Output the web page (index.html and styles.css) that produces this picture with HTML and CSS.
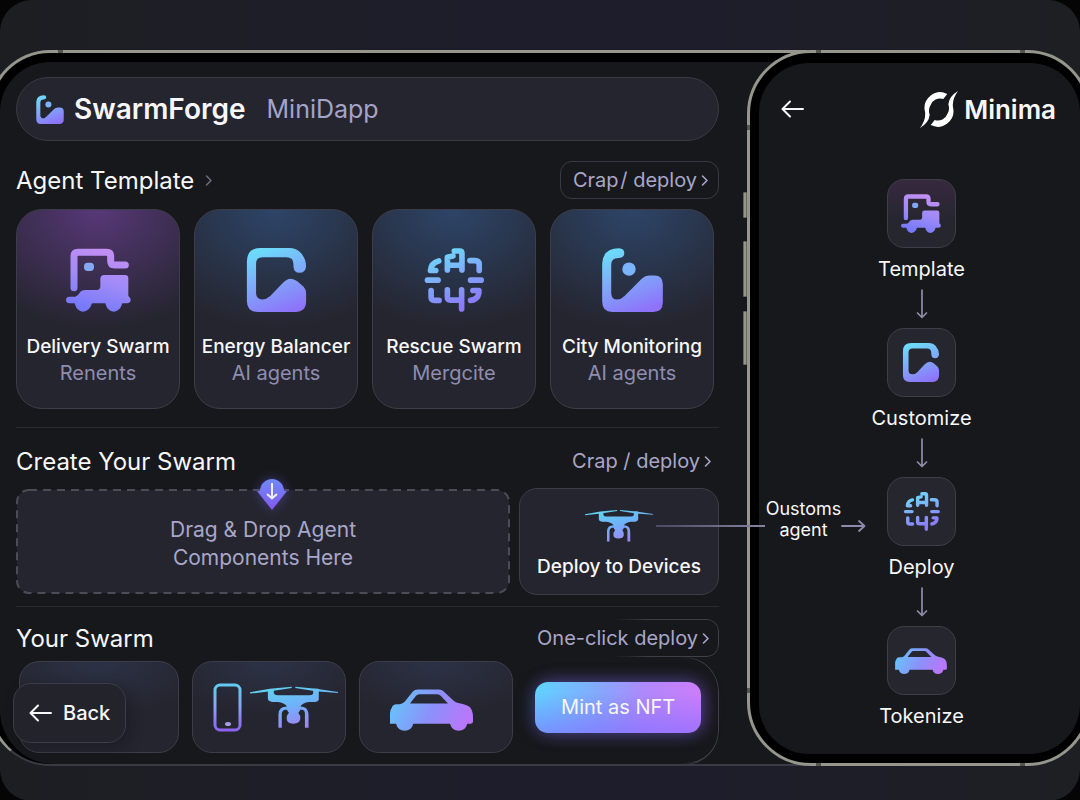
FILE: index.html
```html
<!DOCTYPE html>
<html lang="en">
<head>
<meta charset="utf-8">
<meta name="viewport" content="width=device-width, initial-scale=1">
<title>SwarmForge MiniDapp</title>
<link rel="stylesheet" href="styles.css">
</head>
<body>
<svg class="defs" aria-hidden="true">
  <defs>
    <linearGradient id="g-truck" gradientUnits="userSpaceOnUse" x1="130" y1="0" x2="75" y2="190">
      <stop offset="0" stop-color="#c68ff2"/><stop offset=".5" stop-color="#a08bf8"/><stop offset="1" stop-color="#7478fa"/>
    </linearGradient>
    <linearGradient id="g-cool" gradientUnits="userSpaceOnUse" x1="50" y1="0" x2="120" y2="190">
      <stop offset="0" stop-color="#6cdcfa"/><stop offset=".5" stop-color="#80a6fa"/><stop offset="1" stop-color="#8e72fa"/>
    </linearGradient>
    <linearGradient id="g-drone" gradientUnits="userSpaceOnUse" x1="110" y1="0" x2="140" y2="130">
      <stop offset="0" stop-color="#62d0ee"/><stop offset=".45" stop-color="#6fb2fa"/><stop offset="1" stop-color="#a084f4"/>
    </linearGradient>
    <linearGradient id="g-car" gradientUnits="userSpaceOnUse" x1="30" y1="20" x2="220" y2="110">
      <stop offset="0" stop-color="#6cbcfa"/><stop offset=".5" stop-color="#8c90fa"/><stop offset="1" stop-color="#b877fa"/>
    </linearGradient>
    <linearGradient id="g-phone" x1="0" y1="0" x2="0" y2="1">
      <stop offset="0" stop-color="#62cdf0"/><stop offset=".5" stop-color="#8aa2f4"/><stop offset="1" stop-color="#8e62f2"/>
    </linearGradient>
    <linearGradient id="g-pin" x1="0" y1="0" x2="0" y2="1">
      <stop offset="0" stop-color="#6f8af8"/><stop offset="1" stop-color="#8258f0"/>
    </linearGradient>
  </defs>
  <symbol id="truck" viewBox="0 0 195 190">
    <path d="M24 118V24Q24 12 36 12H122Q134 12 134 24V38Q134 50 146 50H178" fill="none" stroke="url(#g-truck)" stroke-width="21" stroke-linecap="round"/>
    <rect x="54" y="43" width="30" height="25" rx="11" fill="#86a8f4"/>
    <path d="M103 92Q103 80 115 80H177Q187 80 187 90V143Q195 148 194 156Q193 164 183 165H169Q162 190 143 190Q124 190 118 165H78Q70 190 51 190Q32 190 26 165H10Q0 164 0 155Q0 146 10 145H28Q36 143 40 135Q46 125 58 125H92Q103 125 103 114Z" fill="url(#g-truck)"/>
  </symbol>
  <symbol id="energy" viewBox="0 0 174 188">
    <path d="M0 40Q0 0 40 0H124Q146 0 158 14Q174 32 174 54Q172 73 155 73Q137 73 137 54Q137 38 132 32Q126 27 116 27H46Q27 27 27 46V134Q28 151 45 151Q58 151 68 142L104 104Q126 80 148 98L166 113Q174 122 174 132V156Q174 188 142 188H32Q0 188 0 156Z" fill="url(#g-cool)"/>
  </symbol>
  <symbol id="rescue" viewBox="0 0 181 193">
    <g fill="none" stroke="url(#g-cool)" stroke-width="17" stroke-linecap="round" stroke-linejoin="round">
      <path d="M43 39Q20 45 18 68H34"/>
      <path d="M69 66V28L86 24M90 9H106Q113 9 113 17V66M69 52H113"/>
      <path d="M137 38H152Q165 38 165 50V68"/>
      <path d="M9 97H41M139 97H171"/>
      <path d="M20 128V148Q20 158 30 158H44"/>
      <path d="M69 126V148Q69 157 78 157H112M112 126V184"/>
      <path d="M146 128H164V136Q160 156 139 158"/>
    </g>
  </symbol>
  <symbol id="city" viewBox="0 0 181 191">
    <path d="M0 46Q2 2 50 1Q66 2 66 15Q66 29 48 30Q27 31 27 50V134Q28 154 44 154Q56 154 66 144L118 92Q128 82 142 82H156Q181 82 181 108V162Q181 191 152 191H30Q0 191 0 160Z" fill="url(#g-cool)"/>
    <circle cx="80" cy="63" r="20" fill="#7cb4fa"/>
  </symbol>
  <symbol id="drone" viewBox="0 0 266 130">
    <path d="M0 19L60 8L126 2V6L62 16L0 23ZM137 2L200 8L266 18V21L198 16L137 6Z" fill="url(#g-drone)"/>
    <path d="M54 12H72V22Q74 28 84 28H180Q190 28 191 22V8H208V40Q206 48 196 48H178Q160 50 152 62Q166 62 172 70Q177 76 177 90V126H166V84Q166 74 158 72H152Q150 78 146 82Q154 90 152 100Q150 114 131 114Q112 114 111 100Q110 88 118 82Q114 78 112 72H106Q96 74 96 86V126H86V86Q86 62 112 62Q104 50 84 48H66Q54 46 54 38Z" fill="url(#g-drone)"/>
  </symbol>
  <symbol id="car" viewBox="0 0 249 125">
    <path fill-rule="evenodd" d="M0 104V72Q0 62 6 54Q8 46 20 45H30Q38 44 44 38L68 8Q74 1 84 1H146Q156 1 162 8L190 34Q196 40 208 42Q230 46 240 54Q249 64 249 84V98Q248 104 242 104H232Q226 125 206 125Q186 125 180 104H70Q64 125 44 125Q24 125 18 104ZM60 43H174L152 20Q148 15 142 15H88Q82 15 78 20Z" fill="url(#g-car)"/>
  </symbol>
  <symbol id="handset" viewBox="0 0 29 49">
    <rect x="2" y="2" width="25" height="45" rx="5" fill="none" stroke="url(#g-phone)" stroke-width="3"/>
    <ellipse cx="15" cy="41" rx="3" ry="2" fill="#a99be8"/>
  </symbol>
  <symbol id="arrow-left" viewBox="0 0 23 18">
    <path d="M9 1.500L1.500 9L9 16.500M1.500 9H22" fill="none" stroke="currentColor" stroke-width="2" stroke-linecap="round" stroke-linejoin="round"/>
  </symbol>
  <symbol id="arrow-down" viewBox="0 0 12 30">
    <path d="M6 1V28M1.500 24L6 28.500L10.500 24" fill="none" stroke="currentColor" stroke-width="1.700" stroke-linecap="round" stroke-linejoin="round"/>
  </symbol>
  <symbol id="chevron" viewBox="0 0 8 13">
    <path d="M1.500 2L6 6.500L1.500 11" fill="none" stroke="currentColor" stroke-width="1.600" stroke-linecap="round" stroke-linejoin="round"/>
  </symbol>
</svg>

<div class="stage">
  <main class="device">
    <span class="notch notch-device"></span>
    <div class="screen">
      <header class="brand">
        <svg class="brand-icon" aria-hidden="true"><use href="#city"/></svg>
        <h1 class="brand-name">SwarmForge</h1>
        <span class="brand-sub">MiniDapp</span>
      </header>

      <section>
        <div class="head">
          <h2 class="title">Agent Template <svg class="chevron" aria-hidden="true"><use href="#chevron"/></svg></h2>
          <button class="link boxed" type="button">Crap&#8202;/ deploy<svg class="chevron" aria-hidden="true"><use href="#chevron"/></svg></button>
        </div>
        <div class="templates">
          <article class="card template violet">
            <svg class="template-icon" aria-hidden="true"><use href="#truck"/></svg>
            <h3 class="template-name">Delivery Swarm</h3>
            <p class="template-note">Renents</p>
          </article>
          <article class="card template">
            <svg class="template-icon" aria-hidden="true"><use href="#energy"/></svg>
            <h3 class="template-name">Energy Balancer</h3>
            <p class="template-note">AI agents</p>
          </article>
          <article class="card template">
            <svg class="template-icon" aria-hidden="true"><use href="#rescue"/></svg>
            <h3 class="template-name">Rescue Swarm</h3>
            <p class="template-note">Mergcite</p>
          </article>
          <article class="card template">
            <svg class="template-icon" aria-hidden="true"><use href="#city"/></svg>
            <h3 class="template-name">City Monitoring</h3>
            <p class="template-note">AI agents</p>
          </article>
        </div>
      </section>

      <section class="create">
        <div class="head">
          <h2 class="title">Create Your Swarm</h2>
          <button class="link" type="button">Crap / deploy<svg class="chevron" aria-hidden="true"><use href="#chevron"/></svg></button>
        </div>
        <div class="build">
          <div class="drop">
            <svg class="dash" aria-hidden="true"><rect class="dash-line" width="100%" height="100%" rx="12"/></svg>
            <svg class="pin" viewBox="0 0 30 34" aria-hidden="true">
              <path d="M0 15H3A12 12 0 1 1 27 15H30L15 34Z" fill="url(#g-pin)"/>
              <path d="M15 7V22M10 18L15 22.500L20 18" fill="none" stroke="#eef" stroke-width="2"/>
            </svg>
            <p class="drop-text">Drag &amp; Drop Agent<br>Components Here</p>
          </div>
          <button class="card deploy" type="button">
            <svg class="drone-small" aria-hidden="true"><use href="#drone"/></svg>
            Deploy to Devices
          </button>
        </div>
      </section>

      <section class="yours">
        <div class="head">
          <h2 class="title">Your Swarm</h2>
          <button class="link boxed faded" type="button">One-click deploy<svg class="chevron" aria-hidden="true"><use href="#chevron"/></svg></button>
        </div>
        <div class="swarm">
          <div class="card slot">
            <button class="back" type="button"><svg class="arrow-left" aria-hidden="true"><use href="#arrow-left"/></svg>Back</button>
          </div>
          <div class="card slot slot-pair">
            <svg class="handset" aria-hidden="true"><use href="#handset"/></svg>
            <svg class="drone" aria-hidden="true"><use href="#drone"/></svg>
          </div>
          <div class="card slot slot-car">
            <svg class="car" aria-hidden="true"><use href="#car"/></svg>
          </div>
          <div class="mint-area">
            <button class="mint" type="button">Mint as NFT</button>
          </div>
        </div>
      </section>
    </div>
  </main>

  <aside class="phone">
    <span class="key key-a"></span><span class="key key-b"></span><span class="key key-c"></span>
    <span class="notch notch-a"></span><span class="notch notch-b"></span>
    <span class="notch notch-c"></span><span class="notch notch-d"></span>
    <span class="notch notch-side notch-e"></span><span class="notch notch-side notch-f"></span>
    <div class="phone-screen">
      <header class="phone-head">
        <button class="icon-button" type="button" aria-label="Back"><svg class="arrow-left" aria-hidden="true"><use href="#arrow-left"/></svg></button>
        <div class="minima">
          <svg class="minima-logo" viewBox="0 0 106 103" aria-hidden="true">
            <path id="swoosh" d="M76 8A44 44 0 0 0 14 58Q17 80 0 103Q25 88 27 66Q22 52 29 40A29 29 0 0 1 65 22Z" fill="#fff"/>
            <use href="#swoosh" transform="rotate(180 53 51.500)"/>
          </svg>
          <span>Minima</span>
        </div>
      </header>
      <ol class="steps">
        <li class="step"><span class="tile tile-violet"><svg class="tile-icon" aria-hidden="true"><use href="#truck"/></svg></span><span>Template</span></li>
        <li class="arrow"><svg class="arrow-down" aria-hidden="true"><use href="#arrow-down"/></svg></li>
        <li class="step"><span class="tile"><svg class="tile-icon" aria-hidden="true"><use href="#energy"/></svg></span><span>Customize</span></li>
        <li class="arrow"><svg class="arrow-down" aria-hidden="true"><use href="#arrow-down"/></svg></li>
        <li class="step">
          <span class="tile"><svg class="tile-icon" aria-hidden="true"><use href="#rescue"/></svg>
            <span class="connector">
              <span class="wire"></span>
              <span class="connector-text">Oustoms<br>agent</span>
              <svg class="arrow-right" viewBox="0 0 25 14" aria-hidden="true"><path d="M1 7H23M18 2L23.500 7L18 12" fill="none" stroke="#8f8cab" stroke-width="1.800" stroke-linecap="round" stroke-linejoin="round"/></svg>
            </span>
          </span>
          <span>Deploy</span>
        </li>
        <li class="arrow"><svg class="arrow-down" aria-hidden="true"><use href="#arrow-down"/></svg></li>
        <li class="step"><span class="tile"><svg class="tile-car" aria-hidden="true"><use href="#car"/></svg></span><span>Tokenize</span></li>
      </ol>
    </div>
  </aside>
</div>
</body>
</html>
```
FILE: styles.css
```css
* { box-sizing: border-box; }

body {
  margin: 0;
  background: #050506;
  color: #f7f7f9;
  font-family: Inter, "Liberation Sans", sans-serif;
}

h1, h2, h3, p, ol { margin: 0; padding: 0; font-weight: 400; }
svg { display: block; flex: none; }
button { font: inherit; color: inherit; background: none; border: 0; padding: 0; cursor: pointer; }
.defs { position: absolute; width: 0; height: 0; }

.stage {
  display: grid;
  grid-template-columns: minmax(0, 1fr) 333px;
  align-items: stretch;
  min-height: 100vh;
  padding: 50px 0 35px;
  border-radius: 32px;
  background: linear-gradient(90deg, #1d1e22, #1e1d2b 45%, #1e1d2b 65%, #1e1f23);
  overflow: hidden;
}

/* main device */
.device {
  position: relative;
  margin: 0 -60px 0 -12px;
  padding: 9px 0 0 9px;
  border: 3px solid #96968d;
  border-right: 0;
  border-bottom: 2px solid #393a44;
  border-radius: 62px 0 0 62px;
  background: #000;
}
.screen {
  height: 100%;
  padding: 15px 88px 10px 16px;
  border-radius: 50px 0 0 54px;
  background: #17181b;
}

.brand {
  display: flex;
  align-items: center;
  height: 64px;
  padding-left: 19px;
  border: 1px solid #3a3a45;
  border-radius: 32px;
  background: #252530;
}
.brand-icon { width: 28px; height: 29px; }
.brand-name { margin-left: 10px; font-size: 28px; font-weight: 600; }
.brand-sub { margin-left: 21px; font-size: 25px; color: #a5a3c8; }

.head {
  display: flex;
  align-items: center;
  justify-content: space-between;
  height: 38px;
  margin-top: 20px;
}
.title { display: flex; align-items: center; gap: 11px; font-size: 24px; }
.title .chevron { color: #6d6c7c; }
.chevron { width: 8px; height: 13px; }
.link { display: flex; align-items: center; gap: 4px; padding-right: 7px; font-size: 20px; color: #a9a7c9; white-space: nowrap; }
.boxed { height: 38px; padding: 0 9px 0 12px; border: 1px solid #3a3a44; border-radius: 12px; }
.faded { position: relative; border: 0; }
.faded::before {
  content: "";
  position: absolute;
  inset: 0;
  border: 1px solid #3f3f49;
  border-radius: 12px;
  -webkit-mask: linear-gradient(90deg, transparent 45%, #000 65%);
  mask: linear-gradient(90deg, transparent 45%, #000 65%);
}

.card { border: 1px solid #3d3d49; background: #25252f; }

.templates {
  display: grid;
  grid-template-columns: repeat(4, minmax(0, 1fr));
  gap: 14px;
  margin: 10px 5px 0 0;
}
.template {
  display: flex;
  flex-direction: column;
  align-items: center;
  height: 200px;
  padding-top: 38px;
  border-radius: 26px;
  background: radial-gradient(ellipse 90% 60% at 50% 0, #2d4568, rgba(45, 69, 104, 0)), #25252f;
  white-space: nowrap;
}
.violet { background: radial-gradient(ellipse 90% 60% at 50% 0, #573878, rgba(87, 56, 120, 0)), #25252f; }
.template-icon { width: 65px; height: 64px; }
.template-name { margin-top: 21px; font-size: 19px; font-weight: 500; line-height: 27px; }
.template-note { font-size: 20px; line-height: 27px; color: #8f8db0; }

.create, .yours { margin-top: 18px; border-top: 1px solid #2a2b30; }
.create .head { margin-top: 14px; }
.build { display: grid; grid-template-columns: minmax(0, 1fr) 200px; gap: 9px; margin-top: 8px; }
.drop {
  position: relative;
  display: grid;
  place-items: center;
  height: 107px;
  padding-top: 5px;
  border-radius: 14px;
}
.dash { position: absolute; inset: 2px 1px; width: calc(100% - 2px); height: calc(100% - 4px); overflow: visible; }
.dash-line { fill: #25252f; stroke: #4c4c58; stroke-width: 2; stroke-dasharray: 8 6; }
.pin { position: absolute; top: -12px; left: calc(50% - 6px); width: 30px; height: 34px; filter: drop-shadow(0 0 6px rgba(110, 90, 240, .45)); }
.drop-text { position: relative; font-size: 21px; line-height: 28px; text-align: center; color: #a9a7c9; }
.deploy {
  display: flex;
  flex-direction: column;
  align-items: center;
  justify-content: space-between;
  padding: 20px 0 14px;
  border-radius: 18px;
  font-size: 19px;
  font-weight: 500;
  line-height: 26px;
}
.drone-small { width: 68px; height: 34px; }

.yours { margin-top: 11px; }
.yours .head { margin-top: 12px; }
.swarm {
  position: relative;
  display: grid;
  grid-template-columns: 160fr 154fr 155fr 193fr;
  gap: 13px;
  height: 92px;
  margin: 4px 0 0 3px;
}
.swarm::after {
  content: "";
  position: absolute;
  top: -4px;
  right: 0;
  bottom: -12px;
  width: 74px;
  border: solid #3d3e48;
  border-width: 1px 1px 2px 0;
  border-radius: 0 34px 34px 0;
  pointer-events: none;
  -webkit-mask: linear-gradient(90deg, transparent 50%, #000 75%);
  mask: linear-gradient(90deg, transparent 50%, #000 75%);
}
.slot {
  position: relative;
  display: flex;
  align-items: center;
  justify-content: center;
  gap: 8px;
  border-radius: 20px;
  background: radial-gradient(ellipse 70% 60% at 50% 0, #2c3246, rgba(44, 50, 70, 0)), #25252f;
}
.slot-pair { padding-left: 14px; }
.slot-car { padding: 6px 8px 0 0; }
.back {
  position: absolute;
  top: 21px;
  left: -7px;
  display: flex;
  align-items: center;
  gap: 11px;
  height: 60px;
  padding: 0 15px;
  border: 1px solid #3d3d49;
  border-radius: 18px;
  background: #23232c;
  box-shadow: 4px 4px 14px rgba(10, 10, 18, .3);
  font-size: 20px;
  font-weight: 500;
}
.arrow-left { width: 23px; height: 18px; }
.handset { width: 29px; height: 49px; }
.drone { width: 88px; height: 43px; }
.car { width: 83px; height: 42px; }
.mint-area { display: flex; align-items: center; padding: 0 18px 0 9px; }
.mint {
  width: 100%;
  height: 51px;
  border-radius: 13px;
  background: linear-gradient(0deg, rgba(128, 108, 255, .6), rgba(128, 108, 255, 0) 80%), linear-gradient(95deg, #5fd4ff, #86a6fc 40%, #b088fb 65%, #cf7cfb);
  box-shadow: -2px 0 18px rgba(80, 130, 250, .3), 4px 0 18px rgba(170, 90, 240, .35);
  font-size: 20px;
}

/* phone */
.phone {
  position: relative;
  margin-right: -11px;
  padding: 10px 8px 9px 9px;
  border: 3px solid #96968d;
  border-radius: 64px;
  background: #000;
}
.phone-screen { height: 100%; padding: 26px 24px 24px 22px; border-radius: 50px; background: #17181b; }
.phone-head { display: flex; align-items: center; justify-content: space-between; height: 40px; }
.icon-button { display: flex; }
.minima { display: flex; align-items: center; gap: 6px; font-size: 26px; font-weight: 600; }
.minima-logo { width: 38px; height: 37px; }

.key, .notch { position: absolute; }
.key { left: -7px; width: 4px; border: 1px solid #66665f; background: #96968d; border-radius: 1px; }
.key-a { top: 139px; height: 26px; }
.key-b { top: 188px; height: 56px; }
.key-c { top: 258px; height: 54px; }
.notch { width: 5px; height: 3px; background: #55554f; }
.notch-device { top: -3px; left: 67px; }
.notch-a { top: -3px; left: 66px; }
.notch-b { top: -3px; right: 63px; }
.notch-c { bottom: -3px; left: 66px; }
.notch-d { bottom: -3px; right: 63px; }
.notch-side { width: 3px; height: 5px; left: -3px; }
.notch-e { top: 72px; }
.notch-f { bottom: 70px; }

.steps { display: flex; flex-direction: column; align-items: center; margin: 50px 0 0 6px; list-style: none; }
.step { display: flex; flex-direction: column; align-items: center; gap: 7px; font-size: 20px; line-height: 28px; }
.tile {
  position: relative;
  display: grid;
  place-items: center;
  width: 69px;
  height: 69px;
  border: 1px solid #3e3e49;
  border-radius: 17px;
  background: #26262f;
}
.tile-violet { background: linear-gradient(#37293f, #26262f 60%); }
.tile-icon { width: 40px; height: 39px; }
.tile-car { width: 52px; height: 26px; }
.arrow { padding: 6px 0 9px; color: #8f8da8; }
.arrow-down { width: 12px; height: 30px; }

/* label and wire that join the deploy card to the deploy step */
.connector {
  position: absolute;
  right: calc(100% + 22px);
  top: 20px;
  display: flex;
  align-items: center;
  font-size: 18px;
  line-height: 21px;
  text-align: center;
}
.wire { width: 109px; height: 2px; margin-top: 14px; background: linear-gradient(90deg, #4c4a62, #8583a0); }
.connector-text { width: 77px; }
.arrow-right { width: 25px; height: 14px; margin: 14px 0 0 -1px; }
```
